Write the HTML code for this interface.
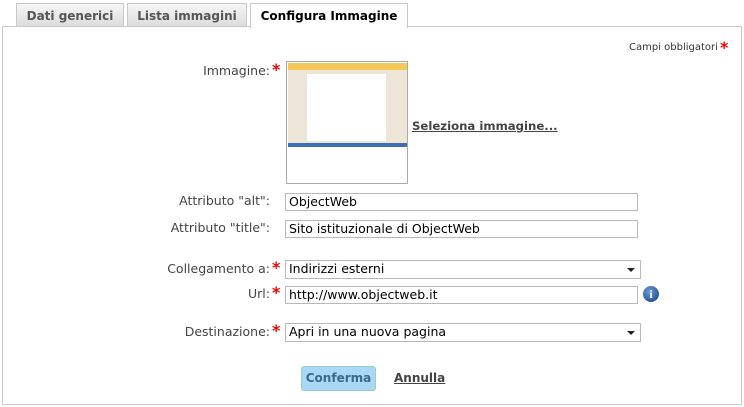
<!DOCTYPE html>
<html><head><style>
body{margin:0;width:744px;height:407px;background:#fff;font-family:"DejaVu Sans","Liberation Sans",sans-serif;position:relative;overflow:hidden;color:#444}
.a{position:absolute}
.tab{position:absolute;top:3px;height:22px;border:1px solid #c8c8c8;border-bottom:none;background:linear-gradient(#f6f6f6,#dcdcdc);font-weight:bold;font-size:12px;line-height:24px;text-align:center;color:#555}
.box{position:absolute;left:2px;top:26px;width:738px;height:377px;border:1px solid #c8c8c8;border-top:1px solid #c8c8c8}
.lbl{position:absolute;right:474px;font-size:12.5px;color:#444;white-space:nowrap}
.st{position:absolute;left:272px;color:#e00;font-size:16px;font-weight:bold}
.in{position:absolute;left:285px;width:348px;height:16px;border:1px solid #b8b8b8;font-size:12.5px;line-height:16px;color:#000;padding-left:3px;box-sizing:content-box}
.sel:after{content:"";position:absolute;right:5px;top:7px;border:4px solid transparent;border-top:4px solid #222;border-bottom:none}
</style></head><body>
<div class="box"></div>
<div class="tab" style="left:16px;width:106px">Dati generici</div>
<div class="tab" style="left:127px;width:118px">Lista immagini</div>
<div class="tab" style="left:250px;width:156px;height:24px;background:#fff;color:#000">Configura Immagine</div>
<div class="a" style="left:629px;top:42px;font-size:10px;color:#333">Campi obbligatori</div>
<div class="a" style="left:720px;top:38px;color:#e00;font-size:16px;font-weight:bold">*</div>

<div class="lbl" style="top:63px">Immagine:</div><div class="st" style="top:60px">*</div>
<div class="a" style="left:286px;top:61px;width:120px;height:121px;border:1px solid #aaa;background:#fff">
 <div class="a" style="left:1px;top:1px;width:119px;height:7px;background:#f5c85a"></div>
 <div class="a" style="left:1px;top:8px;width:119px;height:73px;background:#ece5d8"></div>
 <div class="a" style="left:20px;top:12px;width:79px;height:67px;background:#fff"></div>
 <div class="a" style="left:1px;top:81px;width:119px;height:4px;background:#3b6fb0"></div>
</div>
<div class="a" style="left:412px;top:119px;font-size:11.7px;font-weight:bold;color:#444;text-decoration:underline">Seleziona immagine...</div>

<div class="lbl" style="top:193px">Attributo "alt":</div>
<div class="in" style="top:193px">ObjectWeb</div>
<div class="lbl" style="top:220px">Attributo "title":</div>
<div class="in" style="top:220px">Sito istituzionale di ObjectWeb</div>

<div class="lbl" style="top:261px">Collegamento a:</div><div class="st" style="top:258px">*</div>
<div class="in sel" style="top:260px;width:351px;height:17px">Indirizzi esterni</div>
<div class="lbl" style="top:286px">Url:</div><div class="st" style="top:283px">*</div>
<div class="in" style="top:286px">http://www.objectweb.it</div>
<div class="a" style="left:643px;top:286px;width:16px;height:16px;border-radius:50%;background:radial-gradient(circle at 40% 35%,#6a9ad8,#123d85);color:#fff;font:bold 12px/16px 'Liberation Serif',serif;text-align:center">i</div>

<div class="lbl" style="top:324px">Destinazione:</div><div class="st" style="top:321px">*</div>
<div class="in sel" style="top:323px;width:351px;height:17px">Apri in una nuova pagina</div>

<div class="a" style="left:301px;top:366px;width:73px;height:23px;border:1px solid #9cc;border-radius:3px;background:#a8d8f4;color:#3a6a8a;font-weight:bold;font-size:12px;line-height:23px;text-align:center">Conferma</div>
<div class="a" style="left:394px;top:371px;font-size:12px;font-weight:bold;color:#444;text-decoration:underline">Annulla</div>
</body></html>
